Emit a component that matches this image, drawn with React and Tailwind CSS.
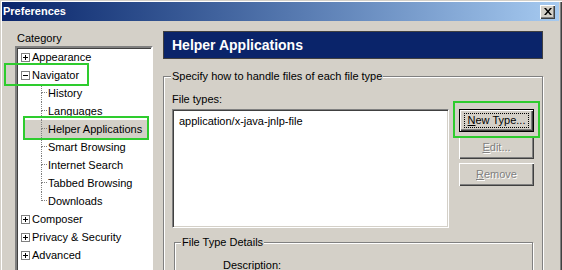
import React from 'react';

const tree = [
  { label: 'Appearance', sign: '+' },
  { label: 'Navigator', sign: '-' },
  { label: 'History', child: true },
  { label: 'Languages', child: true },
  { label: 'Helper Applications', child: true, selected: true },
  { label: 'Smart Browsing', child: true },
  { label: 'Internet Search', child: true },
  { label: 'Tabbed Browsing', child: true },
  { label: 'Downloads', child: true, last: true },
  { label: 'Composer', sign: '+' },
  { label: 'Privacy & Security', sign: '+' },
  { label: 'Advanced', sign: '+' },
];

const Expander = ({ sign }) => (
  <div className="w-[9px] h-[9px] border border-[#808080] bg-white relative flex items-center justify-center">
    <div className="w-[5px] h-px bg-black" />
    {sign === '+' && <div className="absolute w-px h-[5px] bg-black" />}
  </div>
);

const TreeRow = ({ item }) => {
  if (!item.child) {
    return (
      <div className="flex items-center h-[18px] pl-[4px]">
        <Expander sign={item.sign} />
        <span className="ml-[2px]">{item.label}</span>
      </div>
    );
  }
  return (
    <div className="flex h-[18px] pl-[8px]">
      <div className={`flex w-[122px] ${item.selected ? 'bg-[#d4d0c8]' : ''}`}>
        <div className="ml-[16px] w-[6px] flex flex-col">
          <div className="h-[9px] border-l border-b border-dotted border-[#808080]" />
          {!item.last && <div className="flex-1 border-l border-dotted border-[#808080]" />}
        </div>
        <span className="ml-[1px] leading-[18px] whitespace-nowrap">{item.label}</span>
      </div>
    </div>
  );
};

const Button = ({ children, disabled, isDefault }) => (
  <div
    className={`w-[75px] h-[23px] flex items-center justify-center bg-[#d4d0c8] ${
      isDefault
        ? 'border border-black shadow-[inset_1px_1px_0_#fff,inset_-1px_-1px_0_#404040,inset_-2px_-2px_0_#808080]'
        : 'shadow-[inset_1px_1px_0_#fff,inset_-1px_-1px_0_#404040,inset_-2px_-2px_0_#808080]'
    }`}
  >
    {isDefault ? (
      <div className="w-[65px] h-[15px] border border-dotted border-black flex items-center justify-center">
        {children}
      </div>
    ) : (
      <span className={disabled ? 'text-[#808080] [text-shadow:1px_1px_0_#fff]' : ''}>{children}</span>
    )}
  </div>
);

export default function App() {
  return (
    <div className="relative w-[562px] h-[270px] overflow-hidden bg-[#d4d0c8] font-['Liberation_Sans',Arial,sans-serif] text-[11px] text-black shadow-[inset_1px_1px_0_#d4d0c8,inset_2px_2px_0_#fff,inset_-1px_0_0_#404040,inset_-2px_0_0_#808080]">
      {/* title bar */}
      <div className="pt-[2px] pl-[2px] pr-[3px]">
        <div className="h-[19px] flex items-center justify-between bg-gradient-to-r from-[#0a246a] to-[#a6caf0] pl-[1px] pr-[4px]">
          <span className="text-white font-bold text-[11px]">Preferences</span>
          <div className="w-[15px] h-[14px] bg-[#d4d0c8] flex items-center justify-center shadow-[inset_1px_1px_0_#fff,inset_-1px_-1px_0_#404040,inset_-2px_-2px_0_#808080]">
            <svg width="8" height="7" viewBox="0 0 8 7">
              <path d="M0 0h2l2 2.5L6 0h2L5 3.5 8 7H6L4 4.5 2 7H0l3-3.5z" fill="#000" />
            </svg>
          </div>
        </div>
      </div>

      <div className="flex pl-[15px] pt-[10px]">
        {/* category tree */}
        <div className="w-[138px] shrink-0">
          <div className="h-[14px] leading-[14px] pl-[2px]">Category</div>
          <div className="mt-[1px] h-[240px] bg-white border-2 border-t-[#808080] border-l-[#808080] border-r-white border-b-white shadow-[inset_1px_1px_0_#404040]">
            {tree.map((item) => (
              <TreeRow key={item.label} item={item} />
            ))}
          </div>
        </div>

        {/* right panel */}
        <div className="ml-[10px] w-[380px] shrink-0">
          <div className="h-[28px] bg-[#0a246a] border border-[#404040] flex items-center pl-[8px]">
            <span className="text-white font-bold text-[14px]">Helper Applications</span>
          </div>

          <fieldset className="mt-[10px] h-[220px] border border-[#808080] shadow-[inset_1px_1px_0_#fff,1px_1px_0_#fff] pl-[8px] pr-[8px]">
            <legend className="px-[1px] -ml-[1px] leading-[14px] bg-[#d4d0c8]">
              Specify how to handle files of each file type
            </legend>
            <div className="mt-[9px] leading-[14px]">File types:</div>
            <div className="flex mt-[3px]">
              <div className="w-[277px] h-[119px] bg-white border border-t-[#808080] border-l-[#808080] border-r-white border-b-white shadow-[inset_1px_1px_0_#404040,inset_-1px_-1px_0_#d4d0c8] pl-[6px] pt-[3px]">
                application/x-java-jnlp-file
              </div>
              <div className="ml-[10px] flex flex-col gap-[4px]">
                <Button isDefault>
                  <span><span className="underline">N</span>ew Type...</span>
                </Button>
                <Button disabled>
                  <span className="underline">E</span>dit...
                </Button>
                <Button disabled>
                  <span className="underline">R</span>emove
                </Button>
              </div>
            </div>

            <fieldset className="mt-[7px] ml-[2px] w-[359px] h-[60px] border border-[#808080] shadow-[inset_1px_1px_0_#fff,1px_1px_0_#fff] pl-[7px]">
              <legend className="px-[1px] -ml-[1px] leading-[14px] bg-[#d4d0c8]">File Type Details</legend>
              <div className="mt-[9px] pl-[41px] leading-[14px]">Description:</div>
            </fieldset>
          </fieldset>
        </div>
      </div>

      {/* annotation highlights */}
      <div className="absolute left-[4px] top-[63px] w-[85px] h-[23px] border-2 border-[#2ecc2e]" />
      <div className="absolute left-[23px] top-[116px] w-[126px] h-[24px] border-2 border-[#2ecc2e]" />
      <div className="absolute left-[453px] top-[101px] w-[87px] h-[37px] border-2 border-[#2ecc2e]" />
    </div>
  );
}
